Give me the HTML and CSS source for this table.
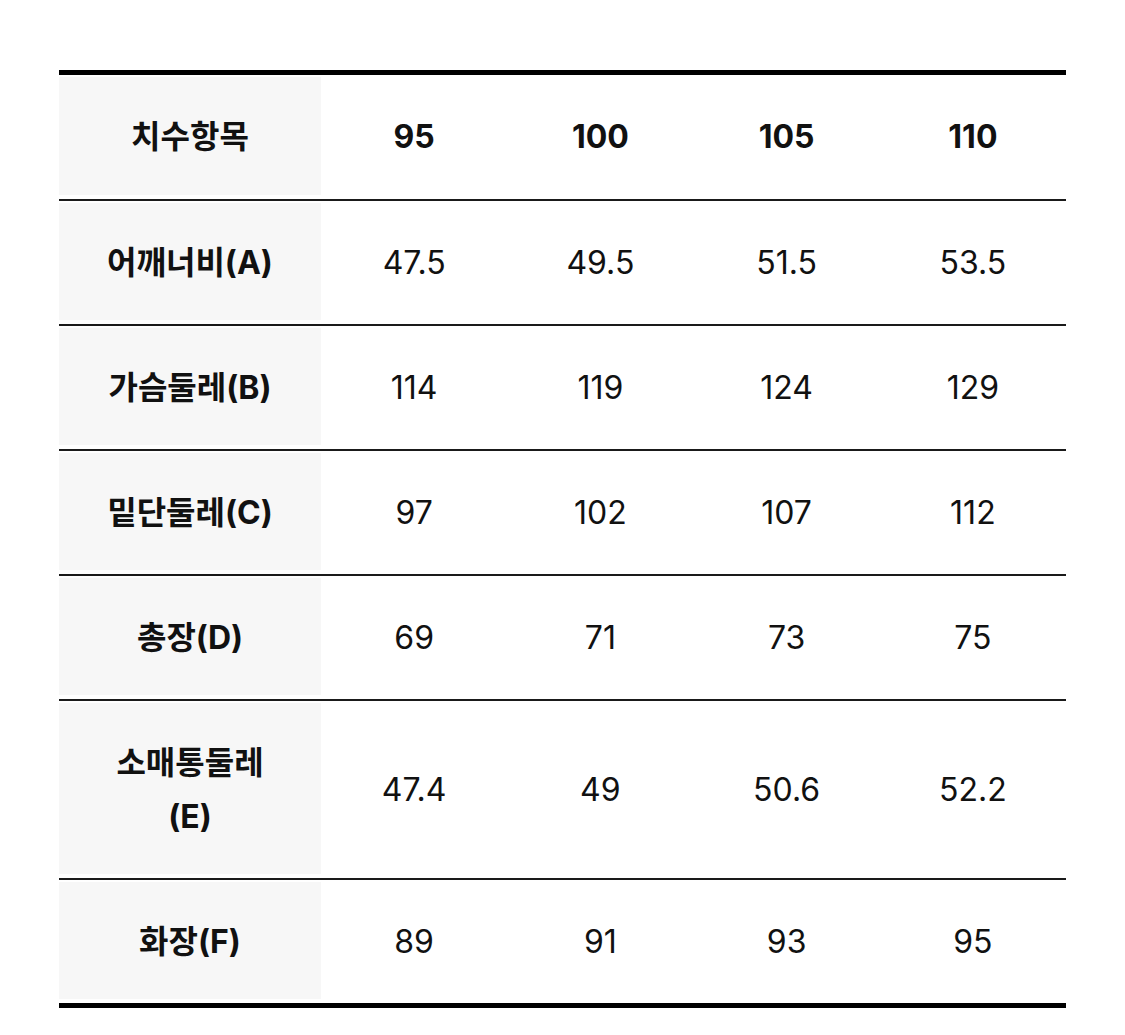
FILE: index.html
```html
<!DOCTYPE html>
<html lang="ko">
<head>
<meta charset="utf-8">
<link rel="stylesheet" href="styles.css">
</head>
<body>
<table class="size-table">
  <thead>
    <tr>
      <th class="label">치수항목</th>
      <th class="size">95</th>
      <th class="size">100</th>
      <th class="size">105</th>
      <th class="size">110</th>
    </tr>
  </thead>
  <tbody>
    <tr><th class="label">어깨너비(A)</th><td>47.5</td><td>49.5</td><td>51.5</td><td>53.5</td></tr>
    <tr><th class="label">가슴둘레(B)</th><td>114</td><td>119</td><td>124</td><td>129</td></tr>
    <tr><th class="label">밑단둘레(C)</th><td>97</td><td>102</td><td>107</td><td>112</td></tr>
    <tr><th class="label">총장(D)</th><td>69</td><td>71</td><td>73</td><td>75</td></tr>
    <tr><th class="label">소매통둘레<br>(E)</th><td>47.4</td><td>49</td><td>50.6</td><td>52.2</td></tr>
    <tr><th class="label">화장(F)</th><td>89</td><td>91</td><td>93</td><td>95</td></tr>
  </tbody>
</table>
</body>
</html>
```

FILE: styles.css
```css
html, body {
  margin: 0;
  padding: 0;
  background: #fff;
}

body {
  padding: 70px 59px 0 59px;
  font-family: Inter, "Noto Sans CJK KR", sans-serif;
  color: #111;
}

.size-table {
  width: 1007px;
  border-collapse: collapse;
  table-layout: fixed;
  border-top: 5px solid #000;
  border-bottom: 5px solid #000;
}

.size-table th,
.size-table td {
  padding: 35px 0 34px;
  font-size: 32px;
  line-height: 54px;
  text-align: center;
  vertical-align: middle;
  white-space: nowrap;
}

.size-table thead th {
  padding: 35px 0 35px;
}

.size-table td {
  font-weight: 400;
  letter-spacing: 0;
}

.size-table th.size {
  font-weight: 700;
  letter-spacing: 0;
}

.size-table th.label {
  width: 262px;
  font-weight: 700;
  letter-spacing: 0;
  background: #f7f7f7;
  box-shadow: inset 0 2px 0 #fff, inset 0 -4px 0 #fff;
}

.size-table tbody tr {
  border-top: 2px solid #1a1a1a;
}
```
